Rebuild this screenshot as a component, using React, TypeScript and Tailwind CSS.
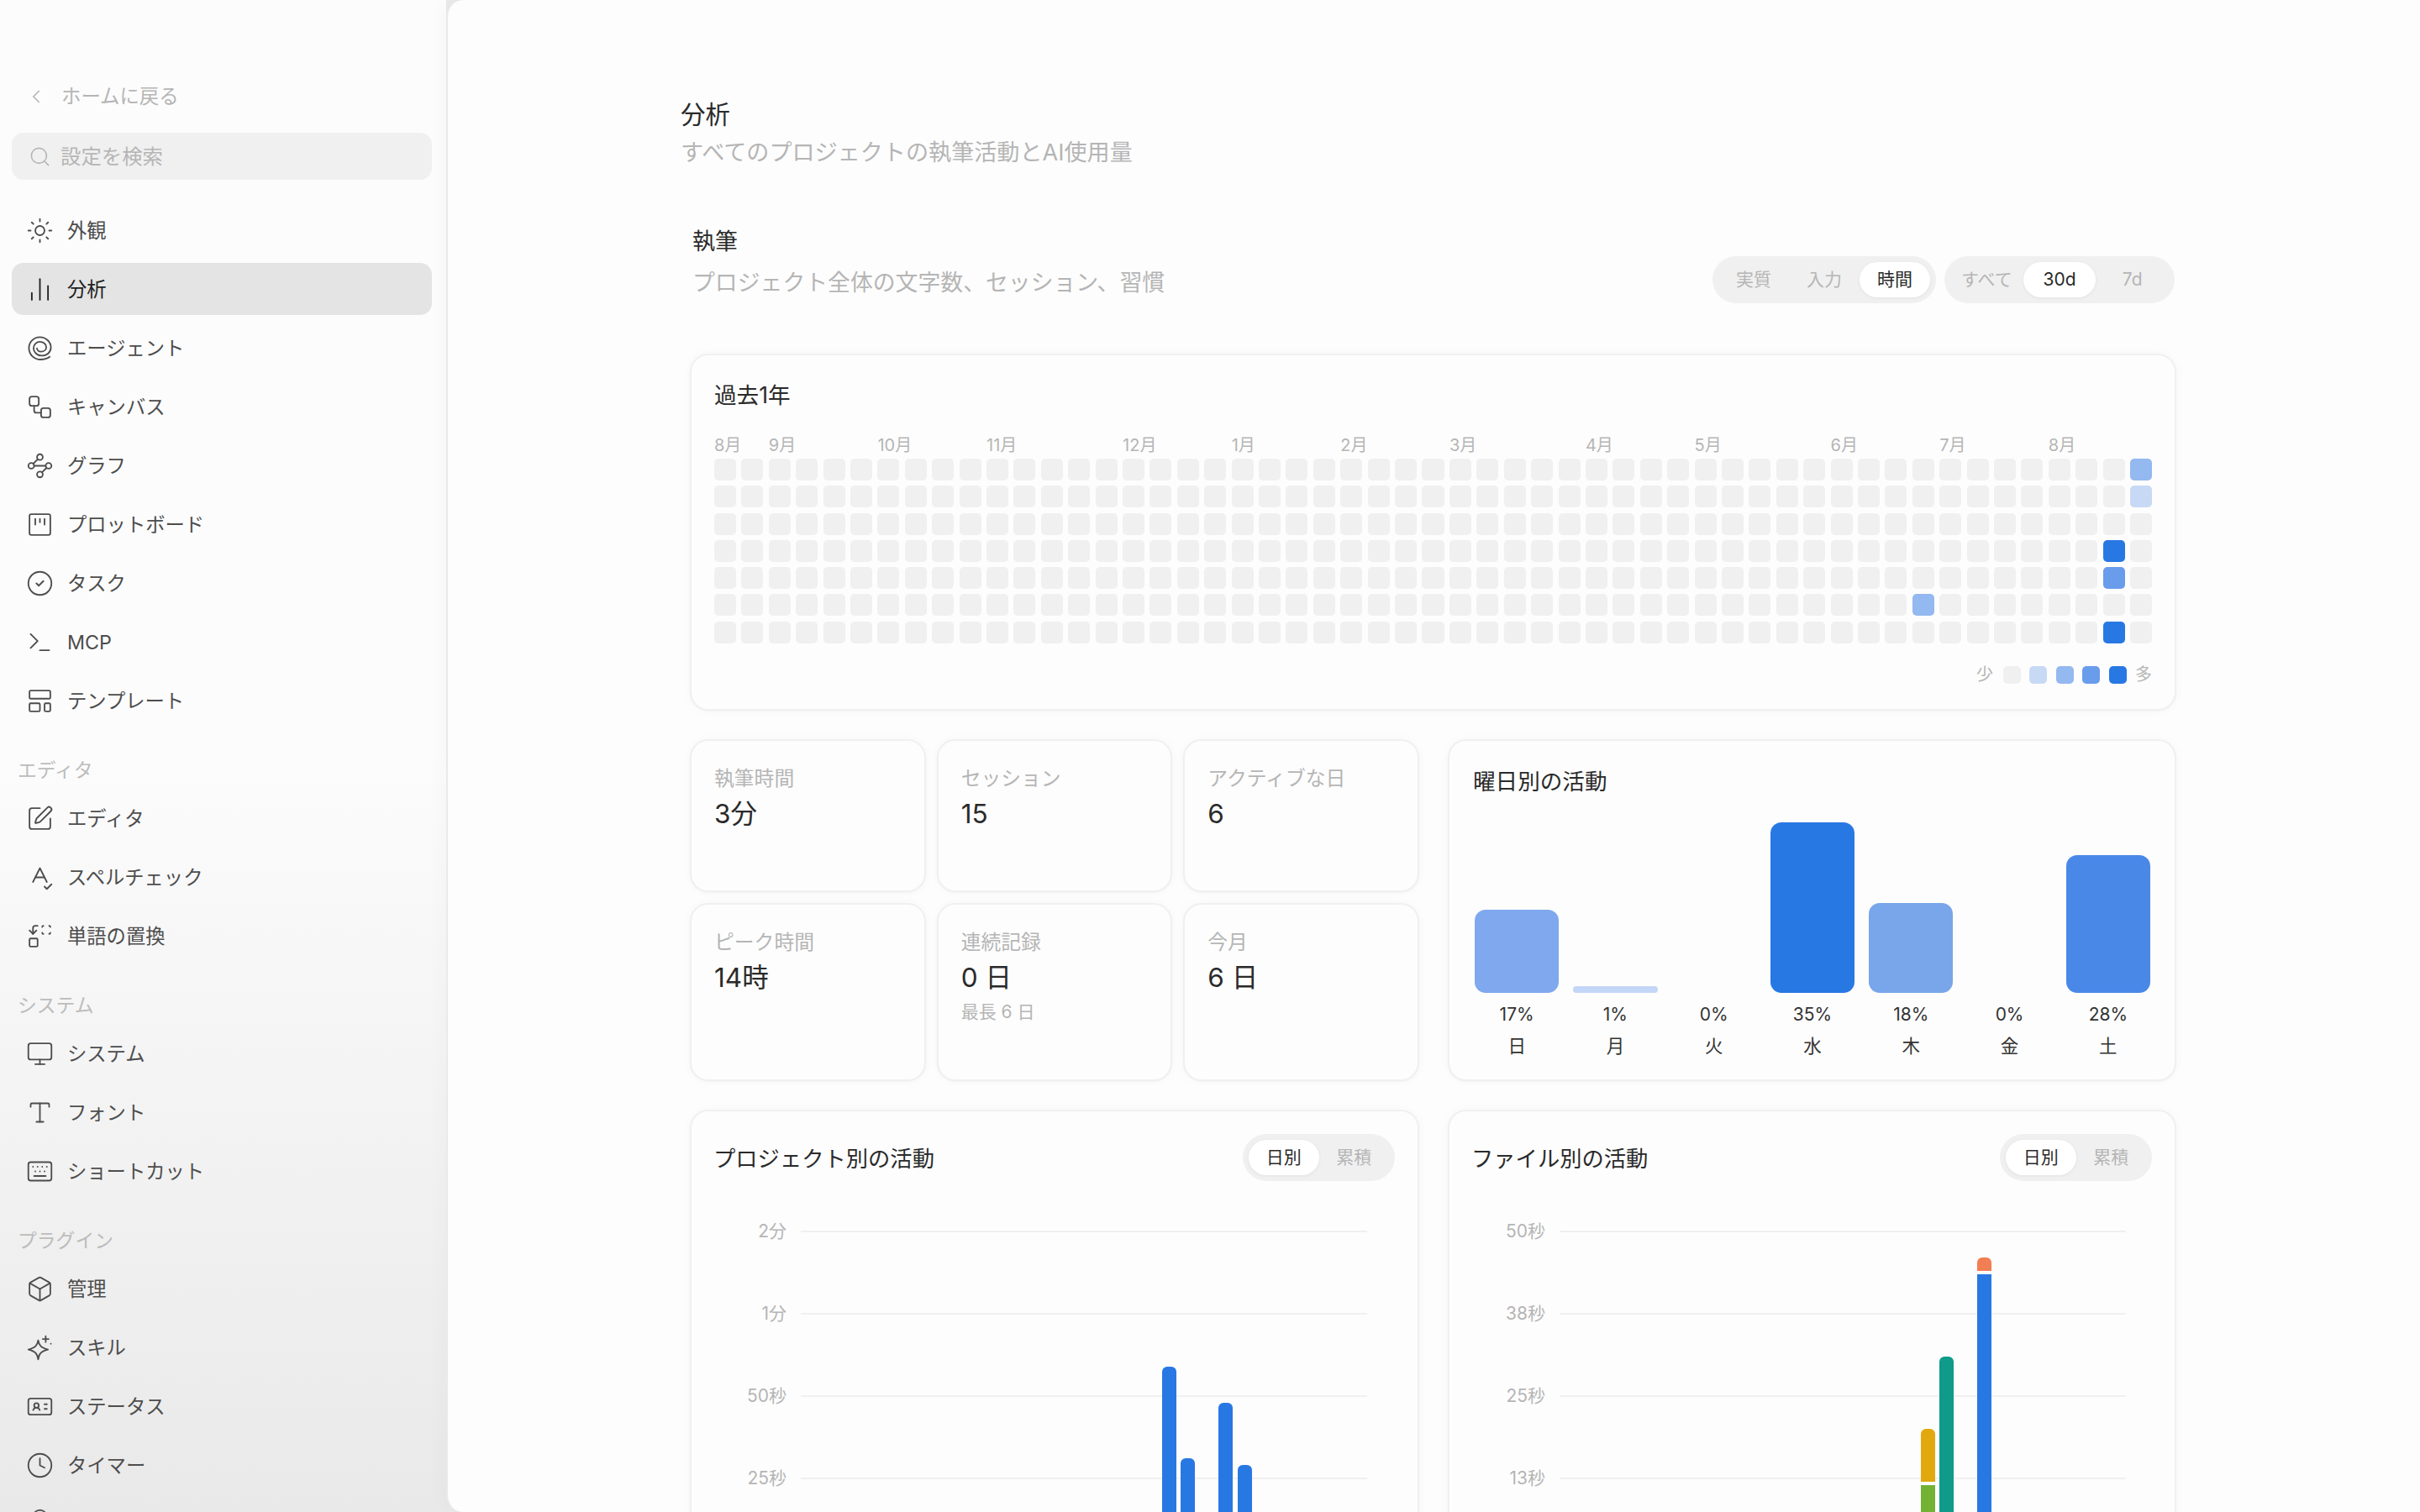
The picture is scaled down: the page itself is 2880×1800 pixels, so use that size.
import { FC, ReactNode } from 'react';
import {
  Bell,
  Box,
  ChartNoAxesColumn,
  ChevronLeft,
  CircleCheck,
  Clock,
  IdCard,
  Keyboard,
  LayoutTemplate,
  Monitor,
  Replace,
  Search,
  SpellCheck,
  SquarePen,
  Sun,
  Terminal,
  Type,
  Waypoints,
  Workflow,
} from 'lucide-react';

const iconProps = { size: 33, strokeWidth: 1.35 };

const SpiralIcon = () => (
  <svg width="33" height="33" viewBox="0 0 24 24" fill="none" stroke="currentColor" strokeWidth="1.35" strokeLinecap="round">
    <path d="M20.500 19.500C18.500 21 15.500 21.800 12.500 21.800C7 21.800 2.500 17.500 2.500 12C2.500 6.500 6.800 2.500 12 2.500C17.200 2.500 21.500 6.500 21.500 11.500C21.500 15.500 18 18.500 13.500 18.500C9.500 18.500 6.500 15.500 6.500 12C6.500 8.800 9 6.500 12 6.500C15 6.500 17.500 8.500 17.500 11C17.500 13.500 15.500 15 13 15C11 15 9.500 13.700 9.500 12.200" />
  </svg>
);

const BoardIcon = () => (
  <svg width="33" height="33" viewBox="0 0 24 24" fill="none" stroke="currentColor" strokeWidth="1.35" strokeLinecap="round">
    <rect x="3" y="3" width="18" height="18" rx="1.500" />
    <path d="M8 7v5M12 7v3M16 7v5" />
  </svg>
);

const SkillIcon = () => (
  <svg width="33" height="33" viewBox="0 0 24 24" fill="none" stroke="currentColor" strokeWidth="1.35" strokeLinecap="round" strokeLinejoin="round">
    <path d="M10.500 5.500C11.200 10 13 12 19 13.500C13 15 11.200 17 10.500 22C9.800 17 8 15 2 13.500C8 12 9.800 10 10.500 5.500Z" />
    <path d="M17 2v5M14.500 4.500h5M21.500 8.500h.01" />
  </svg>
);

const NavItem: FC<{ icon: ReactNode; label: string; active?: boolean }> = ({ icon, label, active }) => (
  <div
    className={`flex h-[62px] items-center gap-[16px] rounded-[14px] pl-[17px] text-[23.300px] ${
      active ? 'bg-[#e3e4e3] text-[#222222]' : 'text-[#4d4d4d]'
    }`}
  >
    <span className="flex w-[33px] shrink-0 justify-center">{icon}</span>
    <span className="pt-[2px]">{label}</span>
  </div>
);

const NavHeading: FC<{ label: string }> = ({ label }) => (
  <div className="mt-[39px] mb-[13px] h-[26px] pl-[7px] text-[22.800px] leading-[26px] text-[#bcbcbc]">{label}</div>
);

const Sidebar = () => (
  <aside className="h-full w-[531px] shrink-0 overflow-hidden bg-[linear-gradient(180deg,#fcfcfc_0%,#fcfcfc_50%,#e9e9e9_100%)] pt-[87px] pr-[17px] pl-[14px]">
    <div className="mb-[15px] flex h-[56px] items-center gap-[17px] pl-[16px] text-[23.400px] text-[#b5b5b5]">
      <ChevronLeft size={26} strokeWidth={1.500} />
      <span>ホームに戻る</span>
    </div>
    <div className="mb-[29px] flex h-[56px] items-center gap-[11px] rounded-[14px] bg-[#f0f0f0] pl-[20px] text-[24.400px] text-[#b5b5b5]">
      <Search size={27} strokeWidth={1.400} />
      <span>設定を検索</span>
    </div>
    <div className="flex flex-col gap-2">
      <NavItem icon={<Sun {...iconProps} />} label="外観" />
      <NavItem icon={<ChartNoAxesColumn {...iconProps} />} label="分析" active />
      <NavItem icon={<SpiralIcon />} label="エージェント" />
      <NavItem icon={<Workflow {...iconProps} />} label="キャンバス" />
      <NavItem icon={<Waypoints {...iconProps} />} label="グラフ" />
      <NavItem icon={<BoardIcon />} label="プロットボード" />
      <NavItem icon={<CircleCheck {...iconProps} />} label="タスク" />
      <NavItem icon={<Terminal {...iconProps} />} label="MCP" />
      <NavItem icon={<LayoutTemplate {...iconProps} />} label="テンプレート" />
    </div>
    <NavHeading label="エディタ" />
    <div className="flex flex-col gap-2">
      <NavItem icon={<SquarePen {...iconProps} />} label="エディタ" />
      <NavItem icon={<SpellCheck {...iconProps} />} label="スペルチェック" />
      <NavItem icon={<Replace {...iconProps} />} label="単語の置換" />
    </div>
    <NavHeading label="システム" />
    <div className="flex flex-col gap-2">
      <NavItem icon={<Monitor {...iconProps} />} label="システム" />
      <NavItem icon={<Type {...iconProps} />} label="フォント" />
      <NavItem icon={<Keyboard {...iconProps} />} label="ショートカット" />
    </div>
    <NavHeading label="プラグイン" />
    <div className="flex flex-col gap-2">
      <NavItem icon={<Box {...iconProps} />} label="管理" />
      <NavItem icon={<SkillIcon />} label="スキル" />
      <NavItem icon={<IdCard {...iconProps} />} label="ステータス" />
      <NavItem icon={<Clock {...iconProps} />} label="タイマー" />
      <div className="flex h-[62px] items-center pl-[17px] text-[#555555]">
        <span className="flex w-[33px] -translate-y-[3px] justify-center">
          <Bell {...iconProps} />
        </span>
      </div>
    </div>
  </aside>
);

const Segmented: FC<{ options: string[]; active: string; className: string }> = ({ options, active, className }) => (
  <div className={`grid h-[56px] rounded-full bg-[#f0f0f0] p-[7px] text-[21px] ${className}`}>
    {options.map((opt) => (
      <div
        key={opt}
        className={`flex items-center justify-center rounded-full ${
          opt === active ? 'bg-white text-[#2a2a2a] shadow-[0_1px_4px_rgba(0,0,0,0.06)]' : 'text-[#b5b5b5]'
        }`}
      >
        {opt}
      </div>
    ))}
  </div>
);

const cardClass =
  'rounded-[22px] border-2 border-[#f0f0f0] bg-[#fdfdfd] shadow-[0_1px_2px_rgba(0,0,0,0.03),0_0_12px_rgba(0,0,0,0.03)]';

const months: [string, number][] = [
  ['8月', 0],
  ['9月', 2],
  ['10月', 6],
  ['11月', 10],
  ['12月', 15],
  ['1月', 19],
  ['2月', 23],
  ['3月', 27],
  ['4月', 32],
  ['5月', 36],
  ['6月', 41],
  ['7月', 45],
  ['8月', 49],
];

const legend = ['#f0f0f0', '#c8d9f6', '#94b8f0', '#6a9cec', '#2878e4'];

// row-column keys of the days that have activity
const heat: Record<string, string> = {
  '0-52': '#94b8f0',
  '1-52': '#c8d9f6',
  '3-51': '#2878e4',
  '4-51': '#6a9cec',
  '5-44': '#94b8f0',
  '6-51': '#2878e4',
};

const YearCard = () => (
  <div className={`${cardClass} px-[27px] pt-[30px] pb-[30px]`}>
    <div className="text-[26.600px] leading-[34px] text-[#2a2a2a]">過去1年</div>
    <div className="mt-[30px] grid h-[26px] w-[1711px] grid-cols-[repeat(53,minmax(0,1fr))] gap-x-[6.400px] text-[20px] leading-[26px] text-[#b5b5b5]">
      {months.map(([name, col], i) => (
        <span key={i} className="whitespace-nowrap" style={{ gridColumnStart: col + 1, gridRowStart: 1 }}>
          {name}
        </span>
      ))}
    </div>
    <div className="mt-[3px] grid w-[1711px] grid-cols-[repeat(53,minmax(0,1fr))] gap-x-[6.400px] gap-y-[6.300px]">
      {Array.from({ length: 7 * 53 }, (_, i) => {
        const key = `${Math.floor(i / 53)}-${i % 53}`;
        return <div key={key} className="h-[26px] rounded-[5px]" style={{ background: heat[key] ?? '#f0f0f0' }} />;
      })}
    </div>
    <div className="mt-[27px] flex h-[21px] w-[1711px] items-center justify-end gap-[10.500px] text-[20px] leading-[21px] text-[#b5b5b5]">
      <span className="mr-[1px]">少</span>
      {legend.map((c) => (
        <div key={c} className="h-[21px] w-[21px] rounded-[5px]" style={{ background: c }} />
      ))}
      <span>多</span>
    </div>
  </div>
);

const StatCard: FC<{ label: string; value: string; note?: string }> = ({ label, value, note }) => (
  <div className={`${cardClass} pt-[29px] pl-[27px]`}>
    <div className="text-[23.800px] leading-[32px] text-[#b5b5b5]">{label}</div>
    <div className="mt-[5px] text-[31.500px] leading-[42px] text-[#2a2a2a]">{value}</div>
    {note && <div className="mt-[5px] text-[21px] leading-[30px] text-[#b5b5b5]">{note}</div>}
  </div>
);

const weekdays = [
  { day: '日', pct: '17%', height: 99, color: '#7fa8ee' },
  { day: '月', pct: '1%', height: 8, color: '#c4d6f7' },
  { day: '火', pct: '0%', height: 0, color: '#c4d6f7' },
  { day: '水', pct: '35%', height: 203, color: '#2878e4' },
  { day: '木', pct: '18%', height: 107, color: '#79a6ea' },
  { day: '金', pct: '0%', height: 0, color: '#c4d6f7' },
  { day: '土', pct: '28%', height: 164, color: '#4a88e8' },
];

const WeekdayCard = () => (
  <div className={`${cardClass} pt-[30px] pr-[29px] pl-[30px]`}>
    <div className="-ml-[2px] text-[26.600px] leading-[36px] text-[#2a2a2a]">曜日別の活動</div>
    <div className="mt-[31px] grid h-[203px] grid-cols-7 items-end gap-x-[17px]">
      {weekdays.map((d) => (
        <div
          key={d.day}
          className={d.height < 20 ? 'rounded-[5px]' : 'rounded-[13px]'}
          style={{ height: d.height, background: d.color }}
        />
      ))}
    </div>
    <div className="mt-[11px] grid grid-cols-7 gap-x-[17px] text-center text-[21px] leading-[30px] text-[#333333]">
      {weekdays.map((d) => (
        <span key={d.day}>{d.pct}</span>
      ))}
    </div>
    <div className="mt-[7px] grid grid-cols-7 gap-x-[17px] text-center text-[21.500px] leading-[30px] text-[#333333]">
      {weekdays.map((d) => (
        <span key={d.day}>{d.day}</span>
      ))}
    </div>
  </div>
);

const ChartCard: FC<{ title: string; ticks: string[]; left: number; children: ReactNode }> = ({
  title,
  ticks,
  left,
  children,
}) => (
  <div className={`${cardClass} h-[560px] pt-[27px] pr-[27px] pl-[28px]`}>
    <div className="flex h-[56px] items-center justify-between">
      <span className="-ml-[2px] pt-[3px] text-[26.300px] text-[#2a2a2a]">{title}</span>
      <Segmented options={['日別', '累積']} active="日別" className="w-[181px] grid-cols-2" />
    </div>
    <svg width="808" height="400" viewBox="0 0 808 400" className="block">
      {ticks.map((t, i) => {
        const y = 60 + i * 98;
        return (
          <g key={t}>
            <line x1={left} x2={left + 674} y1={y} y2={y} stroke="#f0f0f0" strokeWidth="2" />
            <text x={left - 17} y={y + 7} textAnchor="end" fontSize="21" fill="#b5b5b5">
              {t}
            </text>
          </g>
        );
      })}
      {children}
    </svg>
  </div>
);

export default function App() {
  return (
    <div className="flex h-screen w-screen overflow-hidden bg-[#e9e9e9] font-['Inter','Noto_Sans_CJK_JP',sans-serif]">
      <Sidebar />
      <main className="h-full flex-1 overflow-hidden rounded-l-[20px] border-l-2 border-[#eaeaea] bg-[#fdfdfd] pt-[119px] pl-[277px] shadow-[-6px_0_22px_rgba(0,0,0,0.025)]">
        <div className="w-[1780px]">
          <h1 className="text-[29.400px] leading-[36px] text-[#2a2a2a]">分析</h1>
          <p className="mt-[10px] text-[27.100px] leading-[34px] text-[#b5b5b5]">
            すべてのプロジェクトの執筆活動とAI使用量
          </p>

          <div className="mt-[71px] flex items-end justify-between pr-[2px] pl-[14px]">
            <div className="pb-[8px]">
              <h2 className="text-[27px] leading-[36px] text-[#2a2a2a]">執筆</h2>
              <p className="mt-[13px] text-[26.850px] leading-[34px] text-[#b5b5b5]">
                プロジェクト全体の文字数、セッション、習慣
              </p>
            </div>
            <div className="flex gap-[10px]">
              <Segmented options={['実質', '入力', '時間']} active="時間" className="w-[266px] grid-cols-3" />
              <Segmented options={['すべて', '30d', '7d']} active="30d" className="w-[274px] grid-cols-3" />
            </div>
          </div>

          <div className="mt-[60px] ml-[11px]">
            <YearCard />

            <div className="mt-[34px] grid grid-cols-[868px_867px] gap-x-[34px]">
              <div className="grid grid-cols-3 grid-rows-[182px_212px] gap-[13px]">
                <StatCard label="執筆時間" value="3分" />
                <StatCard label="セッション" value="15" />
                <StatCard label="アクティブな日" value="6" />
                <StatCard label="ピーク時間" value="14時" />
                <StatCard label="連続記録" value="0 日" note="最長 6 日" />
                <StatCard label="今月" value="6 日" />
              </div>
              <WeekdayCard />
            </div>

            <div className="mt-[34px] grid grid-cols-[868px_867px] gap-x-[34px]">
              <ChartCard title="プロジェクト別の活動" ticks={['2分', '1分', '50秒', '25秒']} left={102}>
                <rect x="532" y="221" width="17" height="200" rx="6" fill="#2878e4" />
                <rect x="554" y="330" width="17" height="100" rx="6" fill="#2878e4" />
                <rect x="599" y="264" width="17" height="160" rx="6" fill="#2878e4" />
                <rect x="622" y="338" width="17" height="100" rx="6" fill="#2878e4" />
              </ChartCard>
              <ChartCard title="ファイル別の活動" ticks={['50秒', '38秒', '25秒', '13秒']} left={103}>
                <path d="M533 358V301a6 6 0 0 1 6-6h5a6 6 0 0 1 6 6v57z" fill="#e2a90f" />
                <rect x="533" y="362" width="17" height="60" fill="#74b236" />
                <rect x="555" y="209" width="17" height="220" rx="6" fill="#0f9a8a" />
                <path d="M600 107V97a6 6 0 0 1 6-6h5a6 6 0 0 1 6 6v10z" fill="#f27e53" />
                <rect x="600" y="111" width="17" height="300" fill="#2878e4" />
              </ChartCard>
            </div>
          </div>
        </div>
      </main>
    </div>
  );
}
